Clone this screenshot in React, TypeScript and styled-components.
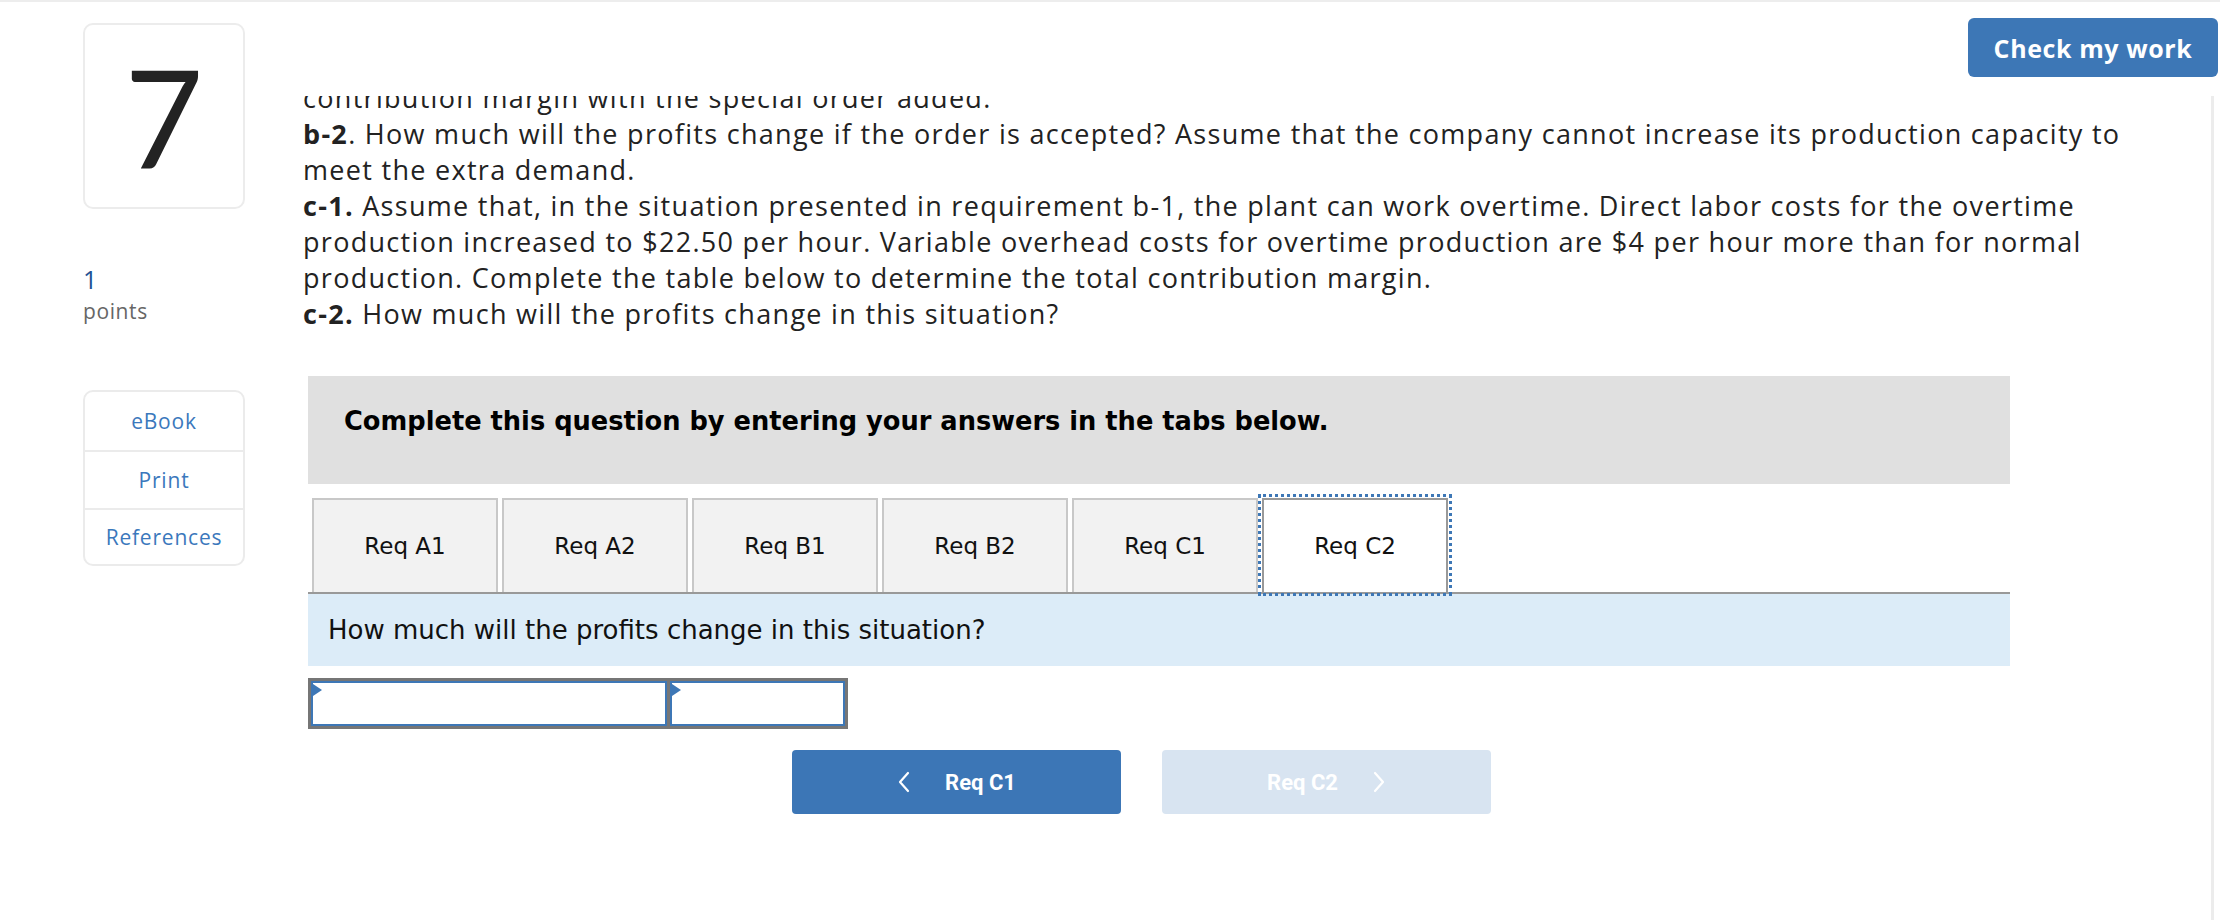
import React from "react";
import styled, { createGlobalStyle } from "styled-components";

const Global = createGlobalStyle`
  html, body {
    margin: 0;
    padding: 0;
    background: #fff;
  }
  body {
    border-top: 2px solid #ededed;
    font-family: "Open Sans", Lato, sans-serif;
    width: 2220px;
    height: 920px;
    box-sizing: border-box;
    overflow: hidden;
  }
`;

const Page = styled.div`
  display: flex;
  height: 918px;
`;

const Side = styled.aside`
  width: 162px;
  margin-left: 83px;
  padding-top: 21px;
  display: flex;
  flex-direction: column;
  flex-shrink: 0;
`;

const NumberBox = styled.div`
  height: 186px;
  box-sizing: border-box;
  border: 2px solid #ececec;
  border-radius: 10px;
  display: flex;
  align-items: center;
  justify-content: center;
  font-family: Lato, sans-serif;
  font-size: 136px;
  line-height: 1;
  color: #232323;
`;

const PointsValue = styled.div`
  margin-top: 54px;
  font-size: 25px;
  line-height: 32px;
  color: #1f5294;
`;

const PointsLabel = styled.div`
  margin-top: 0;
  font-size: 21px;
  line-height: 32px;
  letter-spacing: 0.6px;
  color: #666;
`;

const LinkBox = styled.div`
  margin-top: 63px;
  border: 2px solid #ebebeb;
  border-radius: 10px;
  display: flex;
  flex-direction: column;
`;

const LinkRow = styled.a<{ h: number; last?: boolean }>`
  height: ${p => p.h}px;
  display: flex;
  align-items: center;
  justify-content: center;
  border-bottom: ${p => (p.last ? "none" : "2px solid #ebebeb")};
  color: #3b78bc;
  font-size: 21px;
  letter-spacing: 0.8px;
  text-decoration: none;
`;

const Main = styled.main`
  flex: 1;
  margin-left: 58px;
  display: flex;
  flex-direction: column;
  min-width: 0;
`;

const Header = styled.header`
  height: 94px;
  box-sizing: border-box;
  padding-top: 16px;
  padding-right: 2px;
  display: flex;
  justify-content: flex-end;
  align-items: flex-start;
`;

const CheckButton = styled.button`
  width: 250px;
  height: 59px;
  border: none;
  border-radius: 6px;
  background: #3d77b6;
  color: #fff;
  font-family: "Open Sans", sans-serif;
  font-weight: 700;
  font-size: 25px;
  letter-spacing: 0.6px;
`;

const Scroll = styled.section`
  flex: 1;
  overflow: hidden;
  margin-right: 6px;
  border-right: 3px solid #ececec;
`;

const ScrollInner = styled.div`
  margin-top: -16px;
`;

const QuestionText = styled.div`
  width: 1862px;
  font-size: 27px;
  line-height: 36px;
  letter-spacing: 1.3px;
  color: #222;
`;

const Para = styled.p`
  margin: 0;
`;

const QuestionArea = styled.div`
  margin-left: 5px;
  margin-top: 44px;
  width: 1702px;
`;

const InfoBar = styled.div`
  height: 108px;
  box-sizing: border-box;
  padding: 30px 36px 0;
  background: #e0e0e0;
  font-family: "DejaVu Sans", Verdana, sans-serif;
  font-weight: 700;
  font-size: 25.7px;
  line-height: 30px;
  color: #000;
`;

const TabRow = styled.div`
  margin-top: 14px;
  padding-left: 4px;
  display: flex;
  align-items: flex-end;
  gap: 4px;
  border-bottom: 2px solid #999;
`;

const Tab = styled.div<{ active?: boolean }>`
  width: 186px;
  height: 94px;
  box-sizing: border-box;
  border: 2px solid ${p => (p.active ? "#999" : "#c8c8c8")};
  border-bottom: none;
  background: ${p => (p.active ? "#fff" : "#f2f2f2")};
  outline: ${p => (p.active ? "3px dotted #3d77b6" : "none")};
  outline-offset: 1px;
  display: flex;
  align-items: center;
  justify-content: center;
  font-family: "DejaVu Sans", Verdana, sans-serif;
  font-size: 23px;
  color: #111;
`;

const PromptBand = styled.div`
  height: 72px;
  padding-left: 20px;
  display: flex;
  align-items: center;
  background: #dcecf8;
  font-family: "DejaVu Sans", Verdana, sans-serif;
  font-size: 26px;
  color: #111;
`;

const InputRow = styled.div`
  margin-top: 12px;
  width: 540px;
  height: 51px;
  box-sizing: border-box;
  padding: 3px;
  display: flex;
  gap: 3px;
  background: #767676;
`;

const Cell = styled.div<{ w: number }>`
  position: relative;
  width: ${p => p.w}px;
  box-sizing: border-box;
  border: 2px solid #3d77b6;
  background: #fff;
`;

const Marker = styled.span`
  position: absolute;
  top: 1px;
  left: 0;
  width: 0;
  height: 0;
  border-top: 6px solid transparent;
  border-bottom: 6px solid transparent;
  border-left: 9px solid #3d77b6;
`;

const NavRow = styled.div`
  margin-top: 21px;
  margin-left: 484px;
  display: flex;
  gap: 41px;
`;

const NavButton = styled.button<{ disabled?: boolean }>`
  width: 329px;
  height: 64px;
  border: none;
  border-radius: 4px;
  background: ${p => (p.disabled ? "#d8e4f1" : "#3c76b6")};
  color: #fff;
  display: flex;
  align-items: center;
  justify-content: center;
  gap: 34px;
  font-family: Roboto, "Liberation Sans", sans-serif;
  font-weight: 700;
  font-size: 22px;
`;

const Chevron = ({ dir }: { dir: "left" | "right" }) => (
  <svg width="14" height="22" viewBox="0 0 14 22" fill="none">
    <path
      d={dir === "left" ? "M11 2 L3 11 L11 20" : "M3 2 L11 11 L3 20"}
      stroke="#fff"
      strokeWidth="2.2"
      strokeLinecap="round"
      strokeLinejoin="round"
    />
  </svg>
);

const tabs = ["Req A1", "Req A2", "Req B1", "Req B2", "Req C1", "Req C2"];

export default function App() {
  return (
    <>
      <Global />
      <Page>
        <Side>
          <NumberBox>7</NumberBox>
          <PointsValue>1</PointsValue>
          <PointsLabel>points</PointsLabel>
          <LinkBox>
            <LinkRow h={58}>eBook</LinkRow>
            <LinkRow h={56}>Print</LinkRow>
            <LinkRow h={54} last>References</LinkRow>
          </LinkBox>
        </Side>
        <Main>
          <Header>
            <CheckButton>Check my work</CheckButton>
          </Header>
          <Scroll>
            <ScrollInner>
              <QuestionText>
                <Para>contribution margin with the special order added.</Para>
                <Para>
                  <b>b-2</b>. How much will the profits change if the order is accepted? Assume that the company
                  cannot increase its production capacity to meet the extra demand.
                </Para>
                <Para>
                  <b>c-1.</b> Assume that, in the situation presented in requirement b-1, the plant can work
                  overtime. Direct labor costs for the overtime production increased to $22.50 per hour. Variable
                  overhead costs for overtime production are $4 per hour more than for normal production. Complete
                  the table below to determine the total contribution margin.
                </Para>
                <Para>
                  <b>c-2.</b> How much will the profits change in this situation?
                </Para>
              </QuestionText>
              <QuestionArea>
                <InfoBar>Complete this question by entering your answers in the tabs below.</InfoBar>
                <TabRow>
                  {tabs.map(t => (
                    <Tab key={t} active={t === "Req C2"}>
                      {t}
                    </Tab>
                  ))}
                </TabRow>
                <PromptBand>How much will the profits change in this situation?</PromptBand>
                <InputRow>
                  <Cell w={356}>
                    <Marker />
                  </Cell>
                  <Cell w={175}>
                    <Marker />
                  </Cell>
                </InputRow>
                <NavRow>
                  <NavButton>
                    <Chevron dir="left" />
                    Req C1
                  </NavButton>
                  <NavButton disabled>
                    Req C2
                    <Chevron dir="right" />
                  </NavButton>
                </NavRow>
              </QuestionArea>
            </ScrollInner>
          </Scroll>
        </Main>
      </Page>
    </>
  );
}
